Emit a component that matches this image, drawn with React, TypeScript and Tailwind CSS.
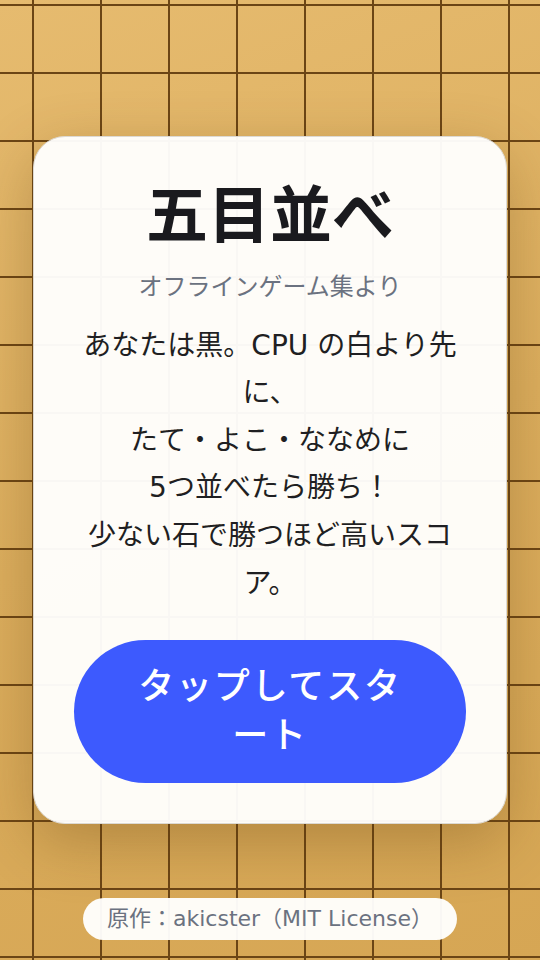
import React from 'react';

const font = 'font-["DejaVu_Sans","Noto_Sans_CJK_JP",sans-serif]';

export default function App() {
    return (
        <div className={`relative min-h-screen w-full overflow-hidden bg-[linear-gradient(160deg,#e6bb6f_0%,#dcae5e_50%,#d6a654_100%)] ${font}`}>
            {/* board grid */}
            <div className="absolute inset-0 bg-[linear-gradient(90deg,#6b4515_2px,transparent_2px),linear-gradient(180deg,#6b4515_2px,transparent_2px)] [background-size:68px_68px] [background-position:32px_4px]" />

            <main className="relative flex min-h-screen items-center justify-center">
                <div className="w-[474px] rounded-[32px] border border-[#dcd9d3] bg-[rgba(255,255,254,0.96)] p-10 text-center shadow-[0_18px_60px_rgba(90,55,10,0.3)]">
                    <h1 className="text-[62px] font-bold leading-[80px] text-[#1a1a1e]">五目並べ</h1>
                    <p className="mt-3 text-[24px] leading-[36px] text-[#6b7280]">オフラインゲーム集より</p>
                    <p className="mt-[17px] text-[28px] leading-[1.7] text-[#1f1f22]">
                        あなたは黒。CPU の白より先に、
                        <br />
                        たて・よこ・ななめに
                        <br />
                        5つ並べたら勝ち！
                        <br />
                        少ない石で勝つほど高いスコア。
                    </p>
                    <button className="mt-[33px] w-full rounded-full bg-[#3d5afe] px-12 py-[23px] text-[36px] font-medium leading-[1.35] tracking-[0.05em] text-white">
                        タップしてスタート
                    </button>
                </div>
            </main>

            <div className="absolute inset-x-0 bottom-5 flex justify-center">
                <span className="rounded-full bg-[rgba(255,255,254,0.96)] px-6 py-1.5 text-[22px] leading-[30px] text-[#6b7280]">
                    原作：akicster（MIT License）
                </span>
            </div>
        </div>
    );
}
